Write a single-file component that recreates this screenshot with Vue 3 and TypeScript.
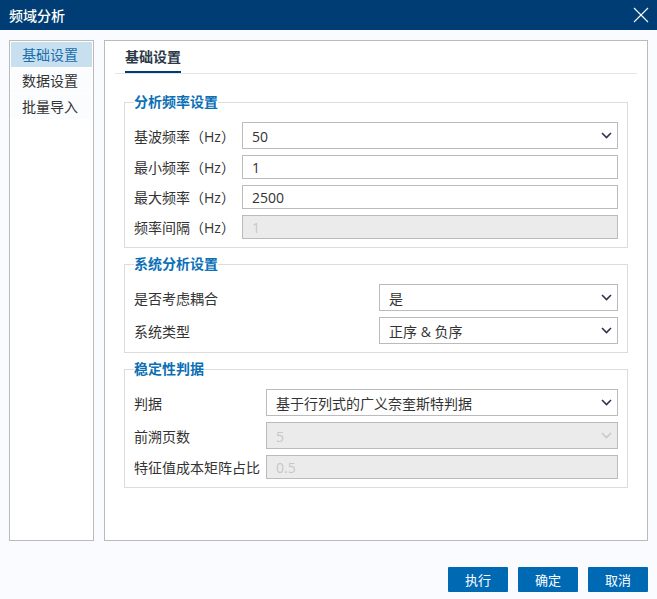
<script setup lang="ts">
import { ref } from 'vue';

interface Field {
  label: string;
  value: string;
  kind: 'select' | 'input';
  disabled?: boolean;
}

interface Group {
  title: string;
  labelWidth: number;
  fields: Field[];
}

const menu = ['基础设置', '数据设置', '批量导入'];
const activeMenu = ref(0);

const groups: Group[] = [
  {
    title: '分析频率设置',
    labelWidth: 108,
    fields: [
      { label: '基波频率（Hz）', value: '50', kind: 'select' },
      { label: '最小频率（Hz）', value: '1', kind: 'input' },
      { label: '最大频率（Hz）', value: '2500', kind: 'input' },
      { label: '频率间隔（Hz）', value: '1', kind: 'input', disabled: true },
    ],
  },
  {
    title: '系统分析设置',
    labelWidth: 245,
    fields: [
      { label: '是否考虑耦合', value: '是', kind: 'select' },
      { label: '系统类型', value: '正序 & 负序', kind: 'select' },
    ],
  },
  {
    title: '稳定性判据',
    labelWidth: 132,
    fields: [
      { label: '判据', value: '基于行列式的广义奈奎斯特判据', kind: 'select' },
      { label: '前溯页数', value: '5', kind: 'select', disabled: true },
      { label: '特征值成本矩阵占比', value: '0.5', kind: 'input', disabled: true },
    ],
  },
];
</script>

<template>
  <div class="dialog">
    <header class="titlebar">
      <span class="title">频域分析</span>
      <svg class="close" width="16" height="16" viewBox="0 0 16 16" fill="none" stroke="white" stroke-width="1.1">
        <line x1="1" y1="1" x2="15" y2="15" />
        <line x1="15" y1="1" x2="1" y2="15" />
      </svg>
    </header>

    <div class="body">
      <nav class="sidebar">
        <div
          v-for="(item, index) in menu"
          :key="item"
          class="menu-item"
          :class="{ active: index === activeMenu }"
          @click="activeMenu = index"
        >
          {{ item }}
        </div>
      </nav>

      <main class="panel">
        <div class="tabs">
          <span class="tab">基础设置</span>
        </div>

        <fieldset v-for="group in groups" :key="group.title" class="group">
          <legend>{{ group.title }}</legend>
          <div
            v-for="field in group.fields"
            :key="field.label"
            class="row"
            :class="field.kind"
          >
            <label :style="{ width: group.labelWidth + 'px' }">{{ field.label }}</label>
            <div class="control" :class="{ disabled: field.disabled }">
              <span>{{ field.value }}</span>
              <svg v-if="field.kind === 'select'" width="11" height="7" viewBox="0 0 11 7" fill="none" stroke-width="1.6">
                <polyline points="1,1 5.5,5.5 10,1" />
              </svg>
            </div>
          </div>
        </fieldset>
      </main>
    </div>

    <footer class="footer">
      <button>执行</button>
      <button>确定</button>
      <button>取消</button>
    </footer>
  </div>
</template>

<style scoped>
.dialog {
  height: 599px;
  display: flex;
  flex-direction: column;
  background: #fafbfe;
  color: #333;
  font-family: "Open Sans", "Noto Sans CJK SC", sans-serif;
  font-size: 14px;
}

.titlebar {
  height: 30px;
  flex-shrink: 0;
  background: #003d75;
  color: #fff;
  display: flex;
  align-items: center;
  justify-content: space-between;
  padding: 0 8px 0 9px;
}

.title {
  font-size: 14px;
  font-weight: 500;
}

.body {
  display: flex;
  gap: 10px;
  height: 501px;
  margin: 10px 9px 0;
}

.sidebar {
  width: 85px;
  box-sizing: border-box;
  border: 1px solid #bbb;
  background: #fff;
  padding: 1px;
}

.menu-item {
  height: 25px;
  line-height: 25px;
  margin-bottom: 1px;
  padding-left: 11px;
  background: #fbfcfe;
}

.menu-item.active {
  background: #c8dff0;
  color: #1a6fae;
}

.panel {
  flex: 1;
  box-sizing: border-box;
  border: 1px solid #bbb;
  background: #fff;
  padding: 0 10px;
}

.tabs {
  height: 33px;
  box-sizing: border-box;
  border-bottom: 1px solid #e3e5e8;
  display: flex;
}

.tab {
  height: 32px;
  margin-left: 10px;
  box-sizing: border-box;
  line-height: 31px;
  font-weight: 700;
  color: #2c3a48;
  border-bottom: 2px solid #003d75;
}

.group {
  width: 504px;
  box-sizing: border-box;
  margin: 21px 0 0 9px;
  padding: 13px 9px 8px 9px;
  border: 1px solid #dcdcdc;
  min-width: 0;
}

.group + .group {
  margin-top: 9px;
}

legend {
  padding: 0;
  margin-left: 0;
  line-height: 14px;
  font-size: 14px;
  font-weight: 700;
  color: #0b6fb5;
}

.row {
  display: flex;
  align-items: center;
  margin-bottom: 6px;
}

.row:last-child {
  margin-bottom: 0;
}

.row label {
  flex-shrink: 0;
  white-space: nowrap;
}

.control {
  flex: 1;
  box-sizing: border-box;
  border: 1px solid #bbb;
  background: #fff;
  padding: 0 9px;
  display: flex;
  align-items: center;
  justify-content: space-between;
}

.row.select .control {
  height: 27px;
}

.row.input .control {
  height: 24px;
}

.control span {
  padding-top: 1px;
}

.control svg {
  stroke: #2f3350;
  margin-right: -4px;
}

.control.disabled {
  background: #ebebeb;
  color: #c4c8cc;
}

.control.disabled svg {
  stroke: #c9c9c9;
}

.footer {
  display: flex;
  justify-content: flex-end;
  gap: 10px;
  margin: 26px 9px 0 0;
}

.footer button {
  width: 60px;
  height: 25px;
  border: none;
  border-radius: 1px;
  background: #0069b4;
  color: #fff;
  font: inherit;
  font-size: 13px;
  padding: 0;
}
</style>
